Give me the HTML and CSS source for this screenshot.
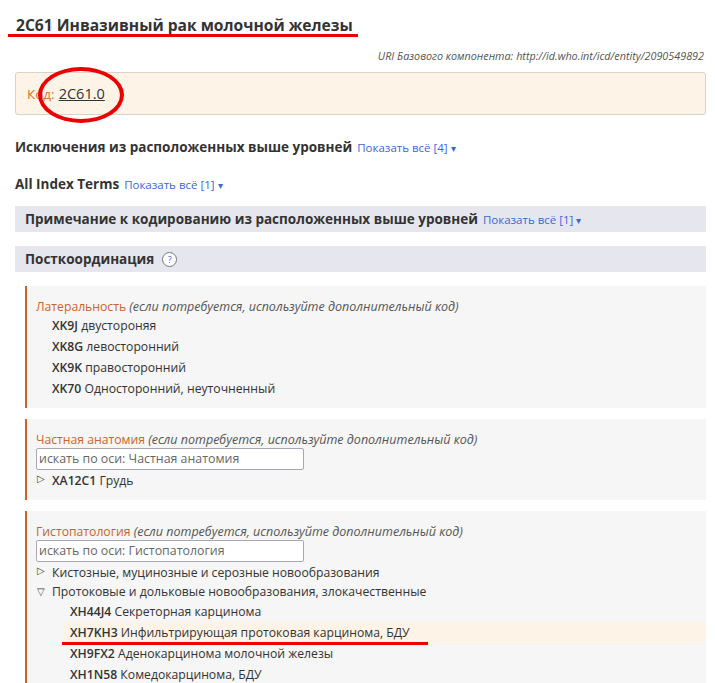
FILE: index.html
```html
<!DOCTYPE html>
<html lang="ru">
<head>
<meta charset="utf-8">
<link rel="stylesheet" href="styles.css">
</head>
<body>
<div class="page">
  <h1 class="title">2C61 Инвазивный рак молочной железы</h1>
  <div class="uri">URI Базового компонента: http://id.who.int/icd/entity/2090549892</div>
  <div class="codebox">
    <span class="codelabel">Код:</span> <span class="code">2C61.0</span>
    <span class="ellipse"></span>
  </div>
  <div class="sect"><span class="sh">Исключения из расположенных выше уровней</span> <a class="more">Показать всё [4] <span class="tri">▾</span></a></div>
  <div class="sect sect2"><span class="sh">All Index Terms</span> <a class="more">Показать всё [1] <span class="tri">▾</span></a></div>
  <div class="bar"><span class="sh">Примечание к кодированию из расположенных выше уровней</span> <a class="more">Показать всё [1] <span class="tri">▾</span></a></div>
  <div class="bar bar2"><span class="sh">Посткоординация</span> <span class="help">?</span></div>

  <div class="axis">
    <div class="axtitle"><span class="axname">Латеральность</span> <i class="axnote">(если потребуется, используйте дополнительный код)</i></div>
    <div class="item"><b>XK9J</b> двустороняя</div>
    <div class="item"><b>XK8G</b> левосторонний</div>
    <div class="item"><b>XK9K</b> правосторонний</div>
    <div class="item"><b>XK70</b> Односторонний, неуточненный</div>
  </div>

  <div class="axis">
    <div class="axtitle"><span class="axname">Частная анатомия</span> <i class="axnote">(если потребуется, используйте дополнительный код)</i></div>
    <div class="search">искать по оси: Частная анатомия</div>
    <div class="node"><span class="arrow">▷</span><span><b>XA12C1</b> Грудь</span></div>
  </div>

  <div class="axis last">
    <div class="axtitle"><span class="axname">Гистопатология</span> <i class="axnote">(если потребуется, используйте дополнительный код)</i></div>
    <div class="search">искать по оси: Гистопатология</div>
    <div class="node"><span class="arrow">▷</span><span>Кистозные, муцинозные и серозные новообразования</span></div>
    <div class="node open"><span class="arrow">▽</span><span>Протоковые и дольковые новообразования, злокачественные</span></div>
    <div class="sub"><b>XH44J4</b> Секреторная карцинома</div>
    <div class="sub hl"><span class="ul"><b>XH7KH3</b> Инфильтрирующая протоковая карцинома, БДУ</span></div>
    <div class="sub"><b>XH9FX2</b> Аденокарцинома молочной железы</div>
    <div class="sub"><b>XH1N58</b> Комедокарцинома, БДУ</div>
  </div>
</div>
</body>
</html>
```

FILE: styles.css
```css
* { box-sizing: border-box; }
html, body { margin: 0; padding: 0; background: #fff; }
body {
  font-family: "Open Sans", "Noto Sans", sans-serif;
  color: #333;
  font-size: 12.2px;
  overflow: hidden;
  height: 683px;
}
.page { padding: 0 9px 0 15px; }
.title {
  position: relative;
  margin: 0 0 0 1px;
  padding-top: 14px;
  font-size: 15.6px;
  font-weight: 700;
  line-height: 23px;
  color: #333;
  display: inline-block;
}
.title::after {
  content: "";
  position: absolute;
  left: -8px;
  right: -5px;
  bottom: 0;
  height: 3px;
  background: #ee0000;
}
.uri {
  text-align: right;
  font-style: italic;
  font-size: 10.8px;
  color: #555;
  margin-top: 12px;
  margin-right: 2px;
  line-height: 14px;
}
.codebox {
  position: relative;
  margin-top: 9px;
  height: 43px;
  background: #fdf4e7;
  border: 1px solid #d9d2c6;
  border-radius: 3px;
  padding: 0 11px;
  display: flex;
  align-items: center;
  gap: 4px;
  font-size: 14.5px;
}
.codelabel { color: #d9772a; font-size: 13.5px; }
.code { color: #333; text-decoration: underline; }
.ellipse {
  position: absolute;
  left: 22px;
  top: -6px;
  width: 86px;
  height: 56px;
  border: 4px solid #ee0000;
  border-radius: 50%;
}
.sect {
  margin-top: 22px;
  line-height: 20px;
  display: flex;
  align-items: baseline;
  gap: 5px;
}
.sect2 { margin-top: 16px; }
.sh { font-weight: 700; font-size: 13.5px; color: #333; }
.more { color: #3a68d6; font-size: 11.5px; }
.tri { font-size: 10px; }
.bar {
  margin-top: 11px;
  height: 26px;
  background: #e6e6ee;
  padding: 0 10px;
  display: flex;
  align-items: center;
  gap: 5px;
}
.bar2 { margin-top: 14px; }
.help {
  display: inline-flex;
  width: 15px;
  height: 15px;
  border: 1px solid #777;
  border-radius: 50%;
  align-items: center;
  justify-content: center;
  font-size: 9px;
  color: #3a68d6;
  margin-left: 3px;
  background: #fff;
}
.axis {
  margin: 14px 0 0 10px;
  background: #f6f6f6;
  border-left: 2px solid #c9652a;
  padding: 13px 0 9px 9px;
  line-height: 21px;
}
.axis + .axis { margin-top: 11px; }
.axis.last { padding-bottom: 20px; }
.axtitle { line-height: 16px; }
.axname { color: #c9652a; }
.axnote { color: #555; font-size: 12.5px; }
.item { padding-left: 16px; }
b { font-weight: 600; }
.search {
  width: 268px;
  height: 22px;
  border: 1px solid #a8a8b4;
  border-radius: 2px;
  background: #fff;
  color: #666;
  line-height: 20px;
  padding-left: 2px;
  font-size: 12.4px;
}
.node { display: flex; gap: 5px; line-height: 21px; }
.node.open { line-height: 18px; }
.arrow { font-size: 10px; width: 11px; color: #444; padding-left: 1px; line-height: 16px; }
.sub { padding: 0 0 0 34px; line-height: 21px; }
.sub.hl { background: #fdf4e7; margin-left: 28px; padding-left: 6px; }
.ul { position: relative; display: inline-block; }
.ul::after {
  content: "";
  position: absolute;
  left: -8px;
  right: -18px;
  bottom: -2px;
  height: 3px;
  background: #ee0000;
}
```
